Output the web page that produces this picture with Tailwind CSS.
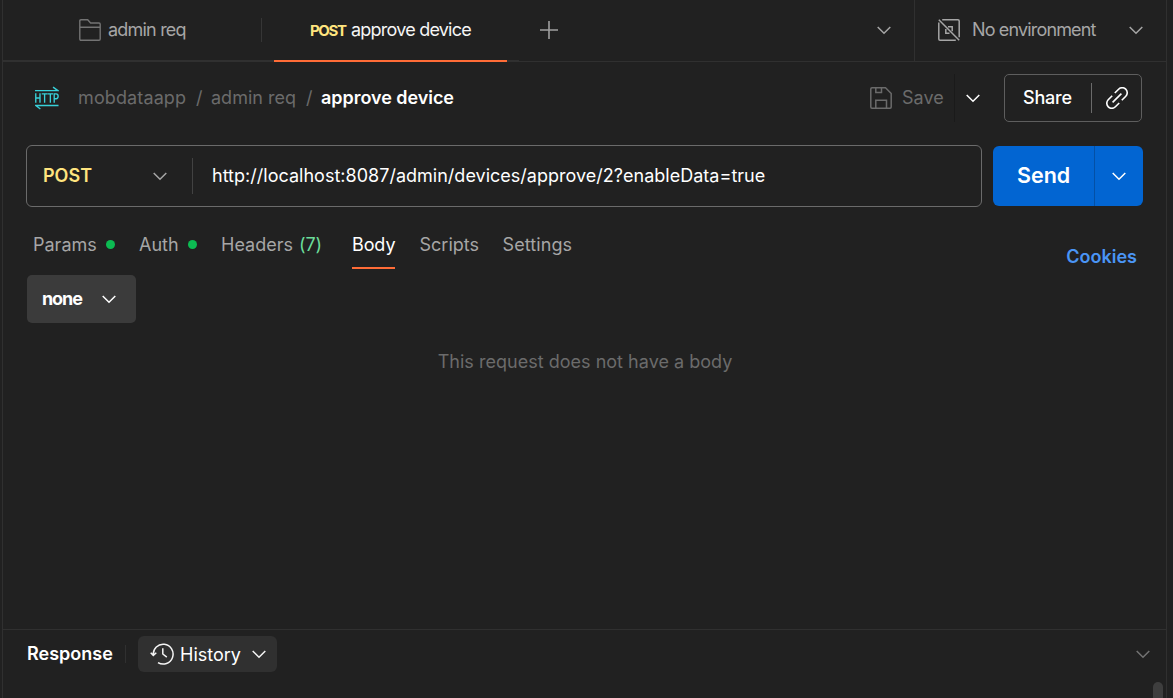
<!DOCTYPE html>
<html lang="en">
<head>
<meta charset="utf-8">
<title>approve device</title>
<script src="https://cdn.jsdelivr.net/npm/@tailwindcss/browser@4"></script>
</head>
<body class="h-[698px] w-[1173px] overflow-hidden bg-[#212121] font-['Inter',sans-serif] text-[18px] leading-6 whitespace-nowrap text-white">
<svg class="hidden">
  <symbol id="chev" viewBox="0 0 14 9"><path d="M.7 1 7 7.3 13.3 1" fill="none" stroke="currentColor" stroke-width="1.5"/></symbol>
</svg>
<div class="ml-[2px] flex h-full w-[1165px] flex-col border-x border-[#303030]">

  <header class="flex h-[62px] shrink-0 border-b border-[#303030]">
    <div class="flex h-[62px] w-[271px] items-center border-b-2 border-[#303030]">
      <div class="flex h-6 w-[259px] items-center border-r border-[#363636] pl-[76px] text-[#a6a6a6]">
        <svg class="h-[22px] w-[22px] text-[#737373]" viewBox="0 0 22 22" fill="none" stroke="currentColor" stroke-width="1.4"><path d="M.8 20V2Q.8.8 2 .8H8.7L11.6 4H20Q21.2 4 21.2 5.2V20Q21.2 21.2 20 21.2H2Q.8 21.2.8 20ZM.8 8.3H21.2"/></svg>
        <span class="ml-[7px] tracking-[-0.8px]">admin req</span>
      </div>
    </div>
    <div class="flex h-[62px] w-[233px] items-center border-b-2 border-[#ff6c37] pl-[36px]">
      <span class="w-[41px] pt-px text-[15px] font-bold tracking-[-1.4px] text-[#ffe47e]">POST</span>
      <span class="tracking-[-0.78px] text-[#f5f5f5]">approve device</span>
    </div>
    <div class="flex h-[61px] w-3 border-b border-[#303030]"></div>
    <div class="flex h-[60px] flex-1 items-center">
      <svg class="ml-[21px] h-[18px] w-[18px] text-[#a0a0a0]" viewBox="0 0 18 18" stroke="currentColor" stroke-width="1.6"><path d="M9 0V18M0 9H18"/></svg>
      <svg class="mr-[23px] ml-auto h-[9px] w-[14px] text-[#a6a6a6]"><use href="#chev"/></svg>
    </div>
    <div class="flex h-[61px] w-[252px] items-center border-l border-[#303030] pb-px pl-[23px] text-[#a6a6a6]">
      <svg class="h-[22px] w-[22px]" viewBox="0 0 22 22" fill="none" stroke="currentColor" stroke-width="1.5"><path d="M4.2.8H20Q21.2.8 21.2 2V18.2M17.8 21.2H2Q.8 21.2.8 20V3.5M.8.8 21.2 21.2"/><path d="M10 7.8H14.2V12.2M11.5 14.2H7.8V10"/></svg>
      <span class="ml-3 w-[124px] tracking-[-0.85px]">No environment</span>
      <svg class="ml-[33px] h-[9px] w-[14px]"><use href="#chev"/></svg>
    </div>
  </header>

  <div class="mt-3 flex h-12 items-center pr-[24px] pl-8 text-[#6b6b6b]">
    <svg class="h-6 w-[24px]" viewBox="0 0 25 24" fill="none" stroke="#38d1d9" stroke-width="1.4">
      <path d="M0 4.3H23.8L18.8.7M24.5 19.8H.9L5.6 23.4"/>
      <path d="M.8 7V17M.8 12H5.2M5.2 7V17M7 7.7H13M10 7.7V17M13.2 7.7H18.8M16 7.7V17M20 17V7.7H22Q24.1 7.7 24.1 10.2T22 12.8H20"/>
    </svg>
    <span class="ml-[19px] w-[118px] tracking-[0.12px]">mobdataapp</span>
    <span class="w-[15px]">/</span>
    <span class="w-[95px]">admin req</span>
    <span class="w-[15px]">/</span>
    <span class="font-semibold tracking-[-0.04px] text-white">approve device</span>
    <svg class="ml-auto h-[22px] w-[22px]" viewBox="0 0 22 22" fill="none" stroke="currentColor" stroke-width="1.5"><path d="M2 .8H15.5L21.2 6.5V20Q21.2 21.2 20 21.2H2Q.8 21.2.8 20V2Q.8.8 2 .8ZM5.8 1V5.5H11.5V1M5.8 21V13.2H16.5V21"/></svg>
    <span class="ml-[10px] w-[52px]">Save</span>
    <div class="flex h-12 w-[50px] items-center border-l border-[#1a1a1a] pl-[11px] text-white"><svg class="h-[9px] w-[14px]"><use href="#chev"/></svg></div>
    <div class="flex h-12 w-[138px] items-center rounded-[5px] border border-[#5e5e5e] text-white">
      <span class="w-[86px] pl-[18px] font-medium tracking-[-0.2px]">Share</span>
      <span class="flex h-[30px] items-center border-l border-[#6b6b6b] pl-[14px]">
        <svg class="h-[22px] w-[22px]" viewBox="0 0 22 22" fill="none" stroke="currentColor" stroke-width="1.6"><path d="M6.6 15.4 15.4 6.6M8.8 6 12.6 2.2A4.95 4.95 0 0 1 19.8 9.2L15.8 13.2M13.2 16 9.4 19.8A4.95 4.95 0 0 1 2.2 12.8L6.2 8.8"/></svg>
      </span>
    </div>
  </div>

  <div class="mt-[23px] flex h-[62px] shrink-0 items-center pl-[23px]">
    <div class="flex h-[62px] w-[956px] items-center rounded-[6px] border border-[#6b6b6b] pl-4">
      <span class="w-[110px] font-semibold text-[#ffe47e]">POST</span>
      <svg class="h-[9px] w-[14px] text-[#a6a6a6]"><use href="#chev"/></svg>
      <span class="ml-[25px] h-9 border-l border-[#424242]"></span>
      <span class="ml-[19px] tracking-[0.015px]">http://localhost:8087/admin/devices/approve/2?enableData=true</span>
    </div>
    <div class="ml-[11px] flex h-[60px] w-[150px] overflow-hidden rounded-[6px] bg-[#0265d2]">
      <div class="flex w-[102px] items-center border-r border-[#0350a6] pb-[2px] pl-6 text-[21.5px] font-semibold">Send</div>
      <div class="flex flex-1 items-center pl-[17px]"><svg class="h-[9px] w-[14px]"><use href="#chev"/></svg></div>
    </div>
  </div>

  <div class="flex h-[68px] pl-[30px] text-[#a6a6a6]">
    <div class="flex h-[62px] items-center pt-[13px]">
      <span class="w-[73px]">Params</span>
      <span class="h-[9px] w-[9px] rounded-full bg-[#0cbb52]"></span>
      <span class="ml-6 w-[49px]">Auth</span>
      <span class="h-[9px] w-[9px] rounded-full bg-[#0cbb52]"></span>
      <span class="ml-6 w-[78px]">Headers</span>
      <span class="w-[53px] tracking-[-0.1px] text-[#6bdd9a]">(7)</span>
      <span class="mt-[11px] h-[37px] w-[43px] border-b-2 border-[#ff6c37] pt-px tracking-[-0.1px] text-white">Body</span>
      <span class="ml-[24.5px] w-[83px]">Scripts</span>
      <span class="tracking-[0.1px]">Settings</span>
    </div>
    <span class="mt-[38px] mr-[29px] ml-auto font-semibold text-[#4a95f5]">Cookies</span>
  </div>

  <div class="ml-6 flex h-12 w-[109px] items-center rounded-[5px] bg-[#3b3b3b] pl-[15px]">
    <span class="w-[60px] font-bold tracking-[-1.1px]">none</span>
    <svg class="h-[9px] w-[14px]"><use href="#chev"/></svg>
  </div>
  <div class="mt-[27px] flex-1 pl-px text-center text-[#6b6b6b] tracking-[0.02px]">This request does not have a body</div>

  <footer class="flex h-[69px] shrink-0 items-start border-t border-[#303030] pt-[6px] pl-6">
    <span class="mt-[6px] w-[98px] font-semibold">Response</span>
    <span class="mt-[9px] h-[18px] border-l border-[#303030]"></span>
    <div class="ml-3 flex h-9 w-[139px] items-center rounded-[6px] bg-[#303030] pl-[12px] text-[#f5f5f5]">
      <svg class="h-[22px] w-[24px]" viewBox="0 0 24 22" fill="none" stroke="currentColor" stroke-width="1.5"><path d="M3.3 12A9.9 9.9 0 1 1 8 19.6M.7 9.8 3.3 12.4 6.3 9.8M12.8 5.2V11L16.8 14.2"/></svg>
      <span class="ml-[6px] w-[72px] pt-px text-white">History</span>
      <svg class="h-[9px] w-[14px]"><use href="#chev"/></svg>
    </div>
    <svg class="mt-[14px] ml-auto h-[9px] w-[14px] text-[#737373]"><use href="#chev"/></svg>
    <div class="mt-[46px] mr-[3px] ml-[3px] h-6 w-[10px] rounded-full bg-[#3e3e3e]"></div>
  </footer>
</div>
</body>
</html>
